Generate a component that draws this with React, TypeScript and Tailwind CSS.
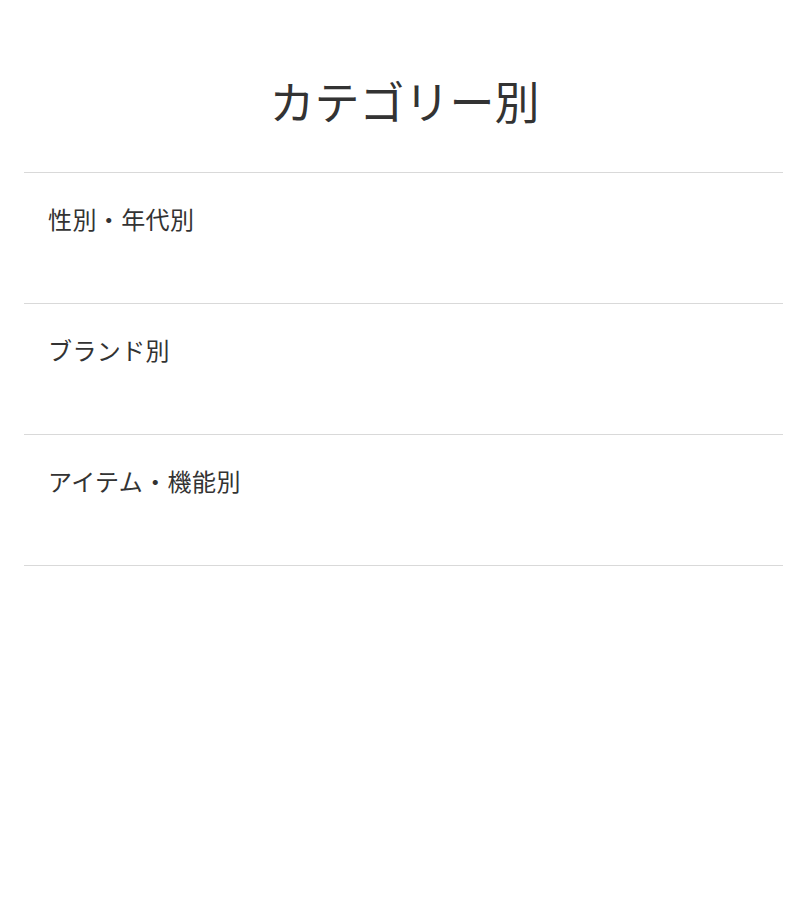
import React from "react";

const items = ["性別・年代別", "ブランド別", "アイテム・機能別"];

export default function App() {
  return (
    <div
      className="w-full min-h-[900px] bg-white text-[#333]"
      style={{ fontFamily: '"Noto Sans CJK JP", "Noto Sans", sans-serif' }}
    >
      <div className="pl-6 pr-[22px] pt-[68px]">
        <h1 className="text-center text-[45px] leading-[66px] font-normal mb-[38px] pl-[2px]">
          カテゴリー別
        </h1>
        <ul className="border-b border-[#d9d9d9]">
          {items.map((t) => (
            <li
              key={t}
              className="border-t border-[#d9d9d9] h-[131px] pt-[28px] px-6"
            >
              <span className="text-[24px] leading-[36px] tracking-[0.4px]">{t}</span>
            </li>
          ))}
        </ul>
      </div>
    </div>
  );
}
